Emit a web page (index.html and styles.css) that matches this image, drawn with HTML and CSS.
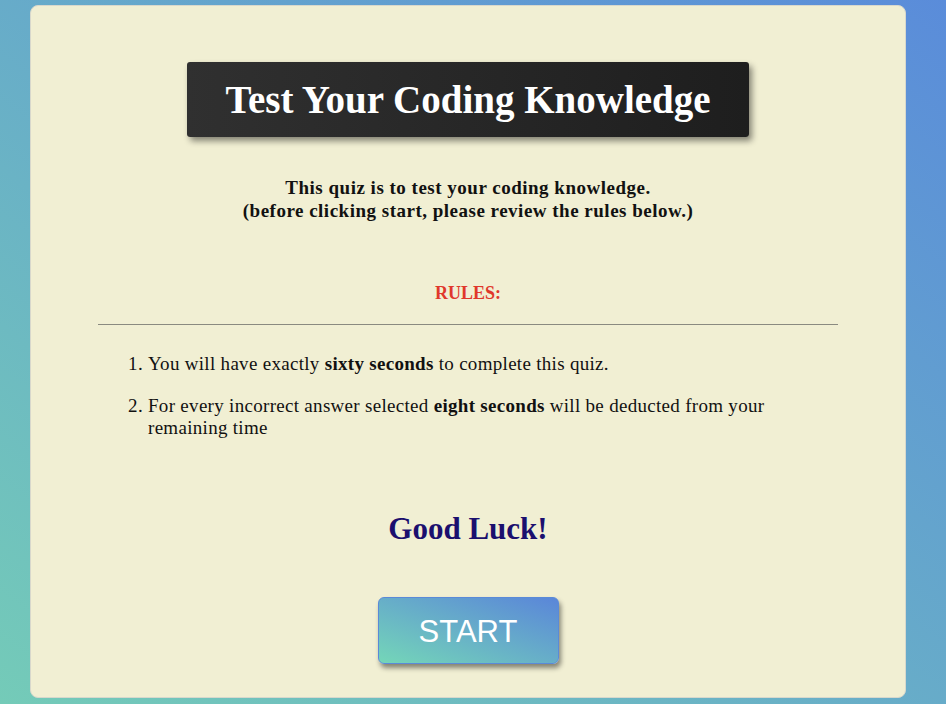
FILE: index.html
```html
<!DOCTYPE html>
<html>
<head>
<meta charset="utf-8">
<link rel="stylesheet" href="styles.css">
</head>
<body>
<main class="card">
  <h1 class="title">Test Your Coding Knowledge</h1>
  <p class="intro">This quiz is to test your coding knowledge.<br>(before clicking start, please review the rules below.)</p>
  <h2 class="rules-head">RULES:</h2>
  <hr class="divider">
  <ol class="rules">
    <li>You will have exactly <b>sixty seconds</b> to complete this quiz.</li>
    <li>For every incorrect answer selected <b>eight seconds</b> will be deducted from your remaining time</li>
  </ol>
  <h2 class="luck">Good Luck!</h2>
  <button class="start">START</button>
</main>
</body>
</html>
```
FILE: styles.css
```css
html, body {
  height: 100%;
}
body {
  margin: 0;
  background: linear-gradient(to top right, #74cbb8, #5a8cda);
  font-family: "Liberation Serif", "DejaVu Serif", serif;
  overflow: hidden;
}
.card {
  box-sizing: border-box;
  width: 876px;
  height: 693px;
  margin: 5px 0 0 30px;
  background: #f1efd3;
  border: 1px solid #d8d8cc;
  border-radius: 8px;
  padding: 56px 67px 0;
  display: flex;
  flex-direction: column;
  align-items: center;
}
.title {
  margin: 0;
  width: 562px;
  height: 75px;
  box-sizing: border-box;
  display: flex;
  align-items: center;
  justify-content: center;
  background: linear-gradient(to right, #303030, #1e1e1e);
  color: #fff;
  font-size: 39px;
  font-weight: bold;
  border-radius: 3px;
  box-shadow: 3px 4px 6px rgba(0,0,0,0.45);
}
.intro {
  margin: 39px 0 0;
  text-align: center;
  font-weight: bold;
  font-size: 19px;
  letter-spacing: 0.5px;
  line-height: 23px;
  color: #111;
}
.rules-head {
  margin: 60px 0 0;
  color: #e0382b;
  font-size: 18px;
  line-height: 23px;
}
.divider {
  align-self: stretch;
  margin: 19px 0 0;
  border: 0;
  border-top: 1px solid #8a8a80;
}
.rules {
  align-self: stretch;
  margin: 28px 0 0;
  padding: 0 0 0 50px;
  font-size: 19px;
  letter-spacing: 0.3px;
  line-height: 22px;
  color: #111;
}
.rules li {
  padding-right: 60px;
}
.rules li + li {
  margin-top: 20px;
}
.luck {
  margin: 72px 0 0;
  color: #1b0f6e;
  font-size: 31px;
  line-height: 36px;
}
.start {
  margin-top: 50px;
  width: 181px;
  height: 67px;
  padding-top: 3px;
  border: 1px solid #5a8ad8;
  border-radius: 6px;
  background: linear-gradient(to top right, #74d6b8, #5a86d9);
  color: #fff;
  font-family: "Liberation Sans", Arial, sans-serif;
  font-size: 31px;
  box-shadow: 2px 4px 5px rgba(0,0,0,0.45);
}
```
